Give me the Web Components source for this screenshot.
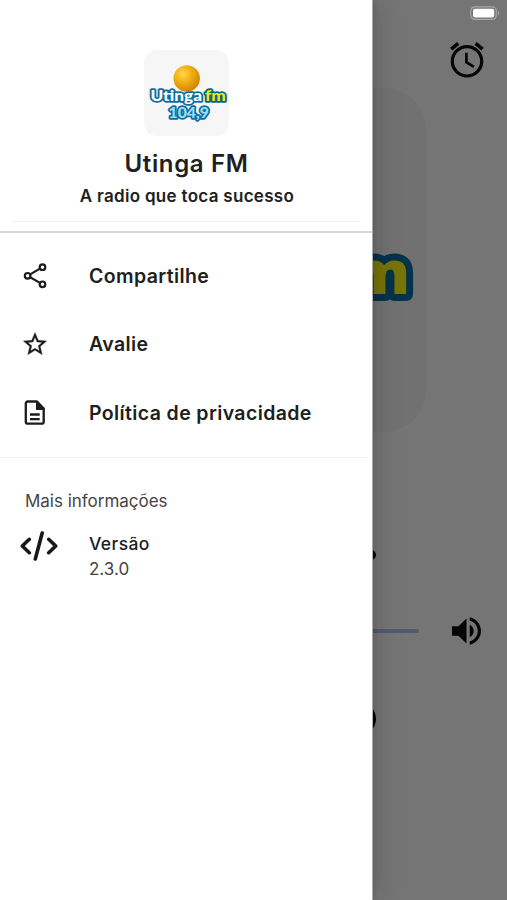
<!DOCTYPE html>
<html lang="pt-BR">
<head>
<meta charset="utf-8">
<title>Utinga FM</title>
<style>
html,body{margin:0;height:100%;overflow:hidden;background:#757575}
body{font-family:Inter,"Liberation Sans",sans-serif;color:#202020}
</style>
</head>
<body>
<radio-app></radio-app>
<script>
const define = (name, html) => customElements.define(name, class extends HTMLElement {
  constructor() {
    super();
    this.attachShadow({ mode: 'open' }).innerHTML = html;
  }
});

define('station-logo', `
<style>
:host{display:block}
svg{display:block;width:100%;height:100%}
text{font-family:Lato,"Noto Sans",sans-serif;font-weight:900;paint-order:stroke;stroke-linejoin:round;stroke-width:3.4}
</style>
<svg viewBox="0 0 85 85">
<defs><radialGradient id="g" cx=".36" cy=".33" r=".7"><stop offset="0" stop-color="#ffd84a"/><stop offset=".45" stop-color="#f3b113"/><stop offset="1" stop-color="#cf8205"/></radialGradient></defs>
<circle cx="42.7" cy="28.4" r="13.2" fill="url(#g)"/>
<text x="24.5" y="68.4" font-size="15.5" textLength="40.5" lengthAdjust="spacingAndGlyphs" fill="#93defc" stroke="#0f6d9d">104,9</text>
<text x="6.5" y="51.3" font-size="15" textLength="51.5" lengthAdjust="spacingAndGlyphs" fill="#fff" stroke="#0f6d9d">Utinga</text>
<text x="61" y="51.3" font-size="15" textLength="20.7" lengthAdjust="spacingAndGlyphs" fill="#efe913" stroke="#0a6288">fm</text>
</svg>`);

define('menu-item', `
<style>
:host{display:grid;grid-template-columns:89px 1fr;align-items:center;height:68.5px;font-size:19.5px;font-weight:630;letter-spacing:.38px;line-height:24px;white-space:nowrap}
.icon{padding-left:21px;height:28px}
.label{padding-bottom:1px}
</style>
<div class="icon"><slot name="icon"></slot></div><div class="label"><slot></slot></div>`);

define('drawer-header', `
<style>
:host{display:flex;flex-direction:column;align-items:center;box-sizing:border-box;height:233px;padding-top:50px;border-bottom:2px solid #d8d8d8}
.tile{width:85px;height:86px;border-radius:13px;background:#f6f6f6}
h1{margin:11.5px 0 0 1px;font-size:24px;line-height:32px;font-weight:600;letter-spacing:.65px}
p{margin:5px 0 0 2px;font-size:17px;line-height:22px;font-weight:600;letter-spacing:.3px}
hr{width:348px;border:0;height:1px;background:#f1f1f1;margin:14.5px 0 0}
</style>
<div class="tile"><station-logo></station-logo></div>
<h1>Utinga FM</h1><p>A radio que toca sucesso</p><hr>`);

define('version-info', `
<style>
:host{display:block;padding-top:32px}
h2{margin:0 0 0 25px;font-size:17px;line-height:22px;font-weight:400;color:#454545;letter-spacing:-.02px}
.row{display:grid;grid-template-columns:89px 1fr;margin-top:20px}
.icon{padding:0 0 0 20px;margin-top:-1px}
svg{display:block}
.name{font-size:17.5px;line-height:24px;font-weight:500;letter-spacing:.4px}
.num{font-size:17px;line-height:24px;margin-top:1px;color:#444}
</style>
<h2>Mais informações</h2>
<div class="row"><div class="icon"><svg width="38" height="30" viewBox="0 0 38 30" fill="none" stroke="#181818" stroke-width="3.6" stroke-linecap="round" stroke-linejoin="round"><path d="M9.3 8.3 2.3 15l7 6.7M28.7 8.3l7 6.7-7 6.7M22.2 2 15.3 28"/></svg></div>
<div><div class="name">Versão</div><div class="num">2.3.0</div></div></div>`);

define('side-drawer', `
<style>
:host{display:block;background:#fff}
svg{display:block}
nav{padding-top:9px;height:215px;border-bottom:1px solid #efefef;margin-right:4px}
</style>
<drawer-header></drawer-header>
<nav>
<menu-item><svg slot="icon" width="28" height="28" viewBox="0 0 28 28" fill="none" stroke="#1c1c1c" stroke-width="2.2"><circle cx="21.5" cy="5.2" r="2.8"/><circle cx="6.6" cy="13.8" r="2.8"/><circle cx="21.5" cy="22.3" r="2.8"/><path d="M9.1 12.4 19 6.6M9.1 15.2 19 20.9"/></svg>Compartilhe</menu-item>
<menu-item><svg slot="icon" width="28" height="28" viewBox="0 .7 24 24" fill="#1c1c1c" stroke="#1c1c1c" stroke-width=".25"><path d="m22 9.24-7.19-.62L12 2 9.19 8.63 2 9.24l5.46 4.73L5.82 21 12 17.27 18.18 21l-1.63-7.03L22 9.24zM12 15.4l-3.76 2.27 1-4.28-3.32-2.88 4.38-.38L12 6.1l1.71 4.04 4.38.38-3.32 2.88 1 4.28L12 15.4z"/></svg>Avalie</menu-item>
<menu-item><svg slot="icon" width="28" height="28" viewBox="0 .5 28 28"><path d="M6.8 3h9.2l6.7 7v13.2a2 2 0 0 1-2 2H6.8a2 2 0 0 1-2-2V5a2 2 0 0 1 2-2z" fill="none" stroke="#1c1c1c" stroke-width="2.3" stroke-linejoin="round"/><path d="M15 3h1.5l6.9 7v1.4H15z" fill="#1c1c1c"/><path d="M9 16h9.7M9 20.6h9.7" stroke="#1c1c1c" stroke-width="2.3"/></svg>Política de privacidade</menu-item>
</nav>
<version-info></version-info>`);

define('player-page', `
<style>
:host{display:flex;flex-direction:column;background:#757575}
svg{display:block}
.status{display:flex;justify-content:flex-end;padding:6px 7px 0 0;height:34px;box-sizing:border-box}
.top{display:flex;justify-content:flex-end;padding:6px 21px 0 0;height:54px;box-sizing:border-box}
.art{align-self:center;width:344px;height:344px;border-radius:42px;background:#717171}
.art text{font:800 61px "Open Sans","Noto Sans",sans-serif;paint-order:stroke;stroke-linejoin:round;stroke-width:14px}
.caption{height:180px;box-sizing:border-box;padding:118px 131px 0 0;display:flex;justify-content:flex-end}
.dot{width:10px;height:10px;border-radius:5px;background:#050505}
.volume{display:flex;align-items:center;height:38px;padding:0 26px 0 88px}
.bar{flex:1;height:4px;border-radius:2px;background:#535a70;margin-right:33px}
.controls{display:flex;justify-content:flex-end;padding:52px 131px 0 0}
.disc{width:34px;height:34px;border-radius:50%;background:#050505}
</style>
<div class="status"><svg width="30" height="15" viewBox="0 0 30 15"><rect x=".8" y=".8" width="25.5" height="12.6" rx="4" fill="none" stroke="#a8a8a8" stroke-width="1.2"/><rect x="3" y="2.7" width="21.2" height="8.8" rx="2" fill="#fff"/><path d="M28 4.8c1.6.8 1.6 3.8 0 4.6z" fill="#a8a8a8"/></svg></div>
<div class="top"><svg width="38" height="40" viewBox="0 0 38 40" fill="none" stroke="#050505" stroke-width="3.2"><circle cx="19" cy="21.3" r="14.7"/><path d="M18.4 12.8v9.4l7.5 4.6" stroke-width="2.7"/><path d="m3.2 9.2 7-5.8M27.6 3.4l7 5.8" stroke-width="3.6"/></svg></div>
<div class="art"><svg width="344" height="344"><text x="328" y="206" text-anchor="end" fill="#76730a" stroke="#05334a">m</text></svg></div>
<div class="caption"><div class="dot"></div></div>
<div class="volume"><div class="bar"></div><svg width="29" height="28" viewBox="3 3 18 18" preserveAspectRatio="none" fill="#050505"><path d="M3 9v6h4l5 5V4L7 9H3zm13.5 3c0-1.77-1.02-3.29-2.5-4.03v8.05c1.48-.73 2.5-2.25 2.5-4.02zM14 3.23v2.06c2.89.86 5 3.54 5 6.71s-2.11 5.85-5 6.71v2.06c4.01-.91 7-4.49 7-8.77s-2.99-7.86-7-8.77z"/></svg></div>
<div class="controls"><div class="disc"></div></div>`);

define('radio-app', `
<style>
:host{display:block;position:relative;width:507px;height:900px;overflow:hidden}
player-page{height:900px}
side-drawer{position:absolute;left:0;top:0;width:372px;height:900px;box-shadow:.5px 0 0 .5px #aaa,2px 0 5px rgba(0,0,0,.09),8px 0 22px rgba(0,0,0,.13)}
</style>
<player-page></player-page><side-drawer></side-drawer>`);
</script>
</body>
</html>
